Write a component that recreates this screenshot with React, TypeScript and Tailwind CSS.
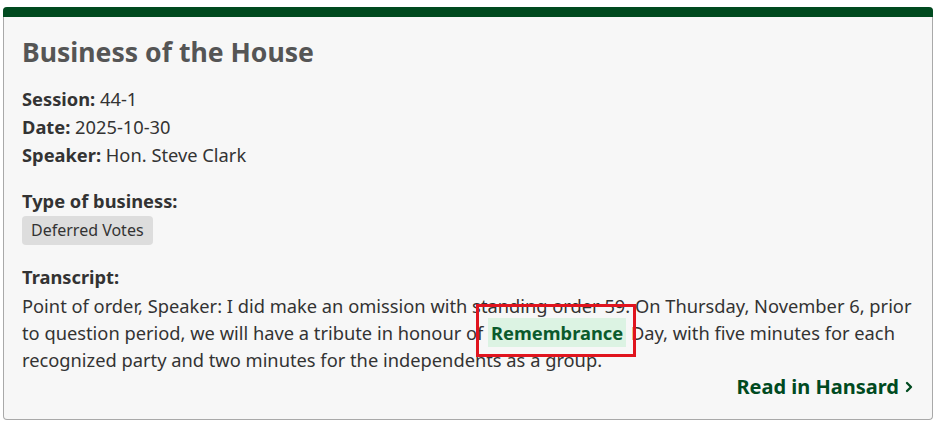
import { ChevronRight } from 'lucide-react'

type Field = { label: string; value: string }

const fields: Field[] = [
  { label: 'Session:', value: '44-1' },
  { label: 'Date:', value: '2025-10-30' },
  { label: 'Speaker:', value: 'Hon. Steve Clark' },
]

function Highlight({ children }: { children: React.ReactNode }) {
  return (
    <span className="relative">
      <mark className="bg-[#dcf3e3] px-[3px] py-[2px] font-bold text-[#0b5a2c]">{children}</mark>
      <span className="pointer-events-none absolute -left-[12px] -top-[16px] h-[53px] w-[160px] border-[3px] border-[#e0141e]" />
    </span>
  )
}

export default function App() {
  return (
    <div className="min-h-screen bg-white pl-[3px] pr-[14px] pt-[7px] font-['Noto_Sans',sans-serif] text-[#333]">
      <article className="rounded-[4px] border border-t-0 border-[#a9a9a9] bg-[#f7f7f7]">
        <div className="-mx-px h-[10px] rounded-t-[4px] bg-[#004a1f]" />
        <div className="px-[18px] pb-[18px] pt-[18px]">
          <h2 className="text-[26.6px] font-bold leading-[34px] text-[#555]">Business of the House</h2>
          <dl className="mt-[16px] text-[18.3px] leading-[28px]">
            {fields.map((f) => (
              <div key={f.label}>
                <dt className="inline font-bold">{f.label}</dt> <dd className="inline">{f.value}</dd>
              </div>
            ))}
          </dl>
          <div className="mt-[18px]">
            <div className="text-[18.3px] font-bold leading-[28px]">Type of business:</div>
            <span className="mt-px inline-block rounded-[4px] bg-[#dddddd] px-[9px] py-[3px] text-[16px] leading-[23px]">
              Deferred Votes
            </span>
          </div>
          <div className="mt-[18px] text-[18.3px] leading-[27px]">
            <div className="font-bold">Transcript:</div>
            <p className="mt-[2px]">
              Point of order, Speaker: I did make an omission with standing order 59. On Thursday, November 6, prior
              to question period, we will have a tribute in honour of <Highlight>Remembrance</Highlight> Day, with five
              minutes for each recognized party and two minutes for the independents as a group.
            </p>
          </div>
          <div className="flex justify-end">
            <a href="#" className="-mr-[3px] flex items-center text-[20px] font-bold leading-[28px] text-[#004a1f]">
              Read in Hansard
              <ChevronRight className="ml-[2px] h-[16px] w-[16px]" strokeWidth={3.5} />
            </a>
          </div>
        </div>
      </article>
    </div>
  )
}
